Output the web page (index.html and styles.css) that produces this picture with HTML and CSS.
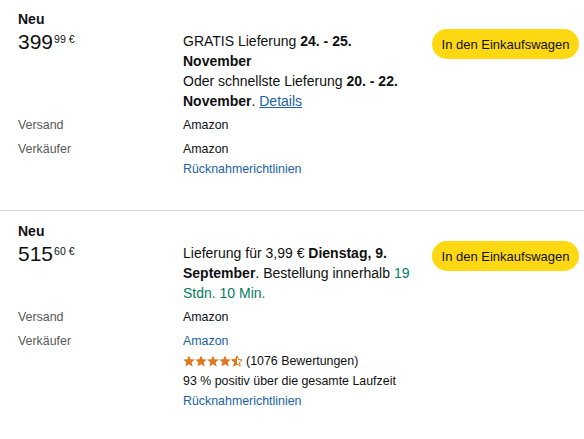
FILE: index.html
```html
<!DOCTYPE html>
<html lang="de">
<head>
<meta charset="utf-8">
<title>Angebote</title>
<link rel="stylesheet" href="styles.css">
</head>
<body>
<div class="offers">
  <section class="offer offer-first">
    <div class="condition">Neu</div>
    <div class="grid">
      <div class="price"><span class="whole">399</span><span class="frac">99 €</span></div>
      <div class="delivery">GRATIS Lieferung <b>24. - 25. November</b><br>Oder schnellste Lieferung <b>20. - 22. November</b>. <a href="#" class="details">Details</a></div>
      <div class="action"><button class="cart">In den Einkaufswagen</button></div>
      <div class="label">Versand</div>
      <div class="value">Amazon</div>
      <div class="label">Verkäufer</div>
      <div class="value">Amazon<br><a href="#" class="link">Rücknahmerichtlinien</a></div>
    </div>
  </section>
  <section class="offer">
    <div class="condition">Neu</div>
    <div class="grid">
      <div class="price"><span class="whole">515</span><span class="frac">60 €</span></div>
      <div class="delivery">Lieferung für 3,99 € <b>Dienstag, 9. September</b>. Bestellung innerhalb <span class="countdown">19 Stdn. 10 Min.</span></div>
      <div class="action"><button class="cart">In den Einkaufswagen</button></div>
      <div class="label">Versand</div>
      <div class="value">Amazon</div>
      <div class="label">Verkäufer</div>
      <div class="value">
        <a href="#" class="link">Amazon</a>
        <div class="rating">
          <svg class="stars" width="60" height="12" viewBox="0 0 60 12" aria-hidden="true">
            <defs>
              <clipPath id="half"><rect x="0" y="0" width="6" height="12"/></clipPath>
            </defs>
            <g fill="#DE7921">
              <polygon points="6,0.4 7.7,4.2 11.8,4.5 8.7,7.2 9.6,11.4 6,9.2 2.4,11.4 3.3,7.2 0.2,4.5 4.3,4.2"/>
              <polygon transform="translate(12 0)" points="6,0.4 7.7,4.2 11.8,4.5 8.7,7.2 9.6,11.4 6,9.2 2.4,11.4 3.3,7.2 0.2,4.5 4.3,4.2"/>
              <polygon transform="translate(24 0)" points="6,0.4 7.7,4.2 11.8,4.5 8.7,7.2 9.6,11.4 6,9.2 2.4,11.4 3.3,7.2 0.2,4.5 4.3,4.2"/>
              <polygon transform="translate(36 0)" points="6,0.4 7.7,4.2 11.8,4.5 8.7,7.2 9.6,11.4 6,9.2 2.4,11.4 3.3,7.2 0.2,4.5 4.3,4.2"/>
            </g>
            <g transform="translate(48 0)">
              <polygon fill="none" stroke="#DE7921" stroke-width="1" stroke-linejoin="round" points="6,1 7.5,4.6 11.2,4.9 8.3,7.3 9.2,11 6,9 2.8,11 3.7,7.3 0.8,4.9 4.5,4.6"/>
              <polygon fill="#DE7921" clip-path="url(#half)" points="6,0.4 7.7,4.2 11.8,4.5 8.7,7.2 9.6,11.4 6,9.2 2.4,11.4 3.3,7.2 0.2,4.5 4.3,4.2"/>
            </g>
          </svg>
          <span>(1076 Bewertungen)</span>
        </div>
        <div>93 % positiv über die gesamte Laufzeit</div>
        <a href="#" class="link">Rücknahmerichtlinien</a>
      </div>
    </div>
  </section>
</div>
</body>
</html>
```

FILE: styles.css
```css
html, body {
  margin: 0;
  padding: 0;
  background: #fff;
}
body {
  font-family: "Liberation Sans", Arial, sans-serif;
  color: #0F1111;
  width: 584px;
  height: 439px;
  overflow: hidden;
}
.offers {
  display: flex;
  flex-direction: column;
}
.offer {
  padding: 10px 5px 31px 18px;
}
.offer + .offer {
  border-top: 1px solid #D5D9D9;
}
.offer-first {
  padding-top: 9px;
}
.condition {
  font-size: 14px;
  font-weight: 700;
  line-height: 20px;
}
.grid {
  display: grid;
  grid-template-columns: 153px 237px 147px;
  column-gap: 12px;
  row-gap: 4px;
  align-items: start;
}
.price {
  grid-column: 1;
  line-height: 26px;
  display: flex;
  align-items: flex-start;
}
.whole {
  font-size: 21px;
}
.frac {
  font-size: 10.5px;
  line-height: 10px;
  margin-top: 5px;
  margin-left: 1px;
}
.delivery {
  grid-column: 2;
  font-size: 14px;
  line-height: 20px;
  margin-top: 2px;
}
.delivery b {
  font-weight: 700;
}
.details {
  color: #2162A1;
  text-decoration: underline;
}
.countdown {
  color: #067D62;
}
.action {
  grid-column: 3;
  grid-row: 1 / span 1;
}
.cart {
  width: 147px;
  height: 30px;
  border: none;
  border-radius: 15px;
  background: #FFD814;
  color: #0F1111;
  font-family: inherit;
  font-size: 13px;
  padding: 0;
  cursor: pointer;
}
.label {
  grid-column: 1;
  font-size: 12.4px;
  line-height: 20px;
  color: #565959;
}
.value {
  grid-column: 2 / span 2;
  font-size: 12.4px;
  line-height: 20px;
}
.link {
  color: #2162A1;
  text-decoration: none;
}
.value .link {
  display: block;
}
.rating {
  display: flex;
  align-items: center;
  gap: 3px;
}
.stars {
  display: block;
}
```
